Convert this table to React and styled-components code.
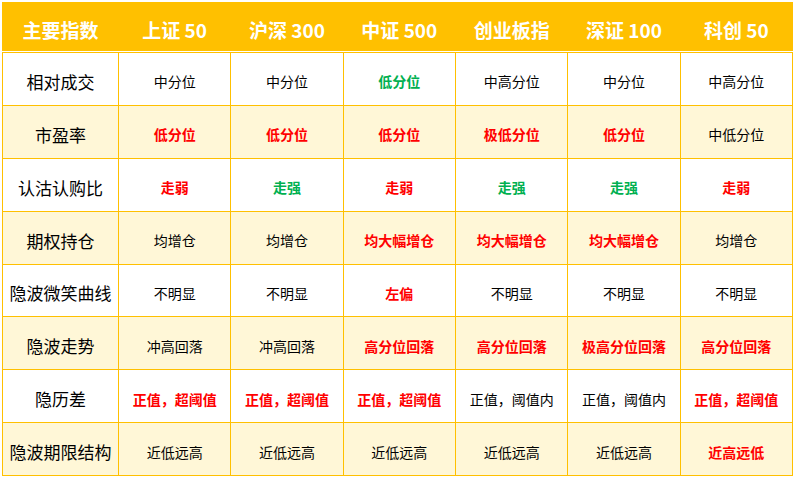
import React from "react";
import styled, { createGlobalStyle } from "styled-components";

const GlobalStyle = createGlobalStyle`
  body {
    margin: 2px;
    background: #ffffff;
    font-family: "Noto Sans CJK SC", "Noto Sans", sans-serif;
  }
`;

const Grid = styled.div`
  width: 791px;
  height: 474px;
  box-sizing: border-box;
  display: grid;
  grid-template-columns: 115px repeat(6, 1fr);
  grid-template-rows: 50px repeat(8, 1fr);
  gap: 1px;
  padding: 0 1px 1px 1px;
  background: #ffc000;
`;

const HeadCell = styled.div`
  display: flex;
  align-items: center;
  justify-content: center;
  padding-top: 5px;
  background: #ffc000;
  color: #ffffff;
  font-size: 19px;
  font-weight: 700;
  border-bottom: 1px solid #ffffff;
  margin: 0 -1px;
`;

const NameCell = styled.div`
  display: flex;
  align-items: center;
  justify-content: center;
  padding-top: 5px;
  background: ${(p) => (p.$alt ? "#fff7d7" : "#ffffff")};
  color: #000000;
  font-size: 17px;
`;

const colors = { r: "#ff0000", g: "#00b050", k: "#000000" };

const Cell = styled.div`
  display: flex;
  align-items: center;
  justify-content: center;
  padding-top: 5px;
  background: ${(p) => (p.$alt ? "#fff7d7" : "#ffffff")};
  color: ${(p) => colors[p.$tone]};
  font-size: 14px;
  font-weight: ${(p) => (p.$tone === "k" ? 400 : 700)};
`;

const headers = ["主要指数", "上证 50", "沪深 300", "中证 500", "创业板指", "深证 100", "科创 50"];

// [name, [text, tone] x6]
const rows = [
  ["相对成交", [["中分位", "k"], ["中分位", "k"], ["低分位", "g"], ["中高分位", "k"], ["中分位", "k"], ["中高分位", "k"]]],
  ["市盈率", [["低分位", "r"], ["低分位", "r"], ["低分位", "r"], ["极低分位", "r"], ["低分位", "r"], ["中低分位", "k"]]],
  ["认沽认购比", [["走弱", "r"], ["走强", "g"], ["走弱", "r"], ["走强", "g"], ["走强", "g"], ["走弱", "r"]]],
  ["期权持仓", [["均增仓", "k"], ["均增仓", "k"], ["均大幅增仓", "r"], ["均大幅增仓", "r"], ["均大幅增仓", "r"], ["均增仓", "k"]]],
  ["隐波微笑曲线", [["不明显", "k"], ["不明显", "k"], ["左偏", "r"], ["不明显", "k"], ["不明显", "k"], ["不明显", "k"]]],
  ["隐波走势", [["冲高回落", "k"], ["冲高回落", "k"], ["高分位回落", "r"], ["高分位回落", "r"], ["极高分位回落", "r"], ["高分位回落", "r"]]],
  ["隐历差", [["正值，超阈值", "r"], ["正值，超阈值", "r"], ["正值，超阈值", "r"], ["正值，阈值内", "k"], ["正值，阈值内", "k"], ["正值，超阈值", "r"]]],
  ["隐波期限结构", [["近低远高", "k"], ["近低远高", "k"], ["近低远高", "k"], ["近低远高", "k"], ["近低远高", "k"], ["近高远低", "r"]]],
];

export default function App() {
  return (
    <>
      <GlobalStyle />
      <Grid>
        {headers.map((h) => (
          <HeadCell key={h}>{h}</HeadCell>
        ))}
        {rows.map(([name, cells], i) => (
          <React.Fragment key={name}>
            <NameCell $alt={i % 2 === 1}>{name}</NameCell>
            {cells.map(([text, tone], j) => (
              <Cell key={j} $alt={i % 2 === 1} $tone={tone}>
                {text}
              </Cell>
            ))}
          </React.Fragment>
        ))}
      </Grid>
    </>
  );
}
